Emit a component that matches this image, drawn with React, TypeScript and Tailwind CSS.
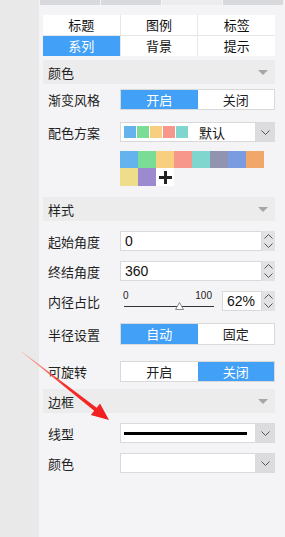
import React from 'react';

const cjk = { fontFamily: '"Noto Sans CJK SC", "Noto Sans", sans-serif' };
const latin = { fontFamily: '"Liberation Sans", Arial, sans-serif' };

const swatches = ['#65b3ee', '#7bdc95', '#f8ce7f', '#f7968a', '#7fd6cf'];
const palette = ['#65b3ee', '#7bdc95', '#f8ce7f', '#f7968a', '#7fd6cf', '#9194ae', '#7b9be0', '#f1a769', '#eedd8a', '#9b8ad0'];

const Chevron = ({ up = false }: { up?: boolean }) => (
  <svg width="9" height="5" viewBox="0 0 9 5">
    <path d={up ? 'M0.5 4.5 L4.5 0.5 L8.5 4.5' : 'M0.5 0.5 L4.5 4.5 L8.5 0.5'} fill="none" stroke="#555" strokeWidth="1" />
  </svg>
);

const Tri = () => (
  <svg width="10" height="5" viewBox="0 0 10 5">
    <path d="M0 0 L10 0 L5 5 Z" fill="#a6a6a8" />
  </svg>
);

const Section = ({ title, className = '' }: { title: string; className?: string }) => (
  <div className={`flex items-center justify-between h-6 bg-[#ececec] pl-[5px] pr-[7px] text-[13px] text-[#222] ${className}`}>
    <span className="leading-none">{title}</span>
    <Tri />
  </div>
);

const Row = ({ label, className = '', children }: { label: string; className?: string; children: React.ReactNode }) => (
  <div className={`flex items-center ${className}`}>
    <div className="w-[77px] pl-[5px] text-[13px] leading-none text-[#222]">{label}</div>
    <div className="flex-1">{children}</div>
  </div>
);

const Toggle = ({ on, h = 'h-[21px]' }: { on: 'left' | 'right'; h?: string }) => (
  <div className={`flex ${h} border border-[#d9d9d9] bg-white text-[13px]`}>
    <div className={`flex-1 flex items-center justify-center ${on === 'left' ? 'bg-[#42a0f6] text-white' : 'text-[#222]'}`}>开启</div>
    <div className={`flex-1 flex items-center justify-center ${on === 'right' ? 'bg-[#42a0f6] text-white' : 'text-[#222]'}`}>关闭</div>
  </div>
);

const Select = ({ children }: { children?: React.ReactNode }) => (
  <div className="flex h-[20px] border border-[#d9d9d9] border-r-0 bg-white">
    <div className="flex-1 flex items-center min-w-0">{children}</div>
    <div className="w-[20px] flex items-center justify-center bg-[#dcdcdf]">
      <Chevron />
    </div>
  </div>
);

const NumInput = ({ value, className = '' }: { value: string; className?: string }) => (
  <div className={`flex h-[20px] ${className}`}>
    <div className="flex-1 flex items-center border border-[#d9d9d9] bg-white pl-[4px] text-[14px] text-[#111]" style={latin}>
      {value}
    </div>
    <div className="w-[13px] flex flex-col items-center justify-center gap-[4px] bg-[#e2e2e5]">
      <Chevron up />
      <Chevron />
    </div>
  </div>
);

const tabs = ['标题', '图例', '标签', '系列', '背景', '提示'];

export default function App() {
  return (
    <div className="relative flex w-[285px] h-[537px] overflow-hidden" style={cjk}>
      <div className="w-[39px] bg-[#e9e9e9]" />
      <div className="flex-1 bg-[#f4f4f6]">
        <div className="flex gap-px pl-px h-[5px]">
          <div className="w-[60px] bg-[#d8d9dd]" />
          <div className="w-[60px] bg-[#d8d9dd]" />
          <div className="w-[60px] bg-[#ececef]" />
          <div className="w-[60px] bg-[#d8d9dd]" />
        </div>

        <div className="ml-[4px] w-[232px]">
          <div className="mt-[10px] grid grid-cols-3 gap-px bg-[#e6e6e8]">
            {tabs.map((t) => (
              <div
                key={t}
                className={`flex items-center justify-center h-[20px] text-[13px] ${t === '系列' ? 'bg-[#42a0f6] text-white' : 'bg-white text-[#111]'}`}
              >
                {t}
              </div>
            ))}
          </div>

          <Section title="颜色" className="mt-[4px]" />
          <Row label="渐变风格" className="mt-[5px]">
            <Toggle on="left" />
          </Row>
          <Row label="配色方案" className="mt-[12px]">
            <Select>
              <div className="flex gap-px pl-[3px]">
                {swatches.map((c) => (
                  <div key={c} className="w-[12px] h-[12px]" style={{ background: c }} />
                ))}
              </div>
              <span className="ml-[11px] text-[13px] text-[#111] leading-none">默认</span>
            </Select>
          </Row>
          <div className="mt-[9px] ml-[77px] grid grid-cols-[repeat(8,18px)] grid-rows-[17px_18px]">
            {palette.map((c, i) => (
              <div key={i} style={{ background: c }} />
            ))}
            <div className="flex items-center justify-center bg-white">
              <svg width="13" height="13" viewBox="0 0 13 13">
                <rect x="5" y="0" width="3" height="13" fill="#222" />
                <rect x="0" y="5" width="13" height="3" fill="#222" />
              </svg>
            </div>
          </div>

          <Section title="样式" className="mt-[11px]" />
          <Row label="起始角度" className="mt-[10px]">
            <NumInput value="0" />
          </Row>
          <Row label="终结角度" className="mt-[10px]">
            <NumInput value="360" />
          </Row>
          <Row label="内径占比" className="mt-[10px]">
            <div className="flex h-[20px]">
              <div className="w-[102px] relative">
                <div className="flex justify-between pl-[3px] pr-[10px] text-[10px] leading-none text-[#222]" style={latin}>
                  <span>0</span>
                  <span>100</span>
                </div>
                <svg className="absolute left-0 top-[9px]" width="102" height="11" viewBox="0 0 102 11">
                  <line x1="4" y1="6.5" x2="94" y2="6.5" stroke="#333" strokeWidth="1" />
                  <path d="M59.5 2.5 L63.5 9.5 L55.5 9.5 Z" fill="#fff" stroke="#888" strokeWidth="1" />
                </svg>
              </div>
              <NumInput value="62%" className="flex-1" />
            </div>
          </Row>
          <Row label="半径设置" className="mt-[12px]">
            <div className="flex h-[22px] border border-[#d9d9d9] bg-white text-[13px]">
              <div className="flex-1 flex items-center justify-center bg-[#42a0f6] text-white">自动</div>
              <div className="flex-1 flex items-center justify-center text-[#222]">固定</div>
            </div>
          </Row>
          <Row label="可旋转" className="mt-[16px]">
            <Toggle on="right" />
          </Row>

          <Section title="边框" className="mt-[7px]" />
          <Row label="线型" className="mt-[10px]">
            <Select>
              <div className="ml-[3px] w-[123px] h-[3px] bg-black" />
            </Select>
          </Row>
          <Row label="颜色" className="mt-[10px]">
            <Select />
          </Row>
        </div>
      </div>

      <svg className="absolute left-0 top-0 pointer-events-none" width="285" height="537" viewBox="0 0 285 537">
        <defs>
          <linearGradient id="ar" x1="22" y1="352" x2="108" y2="419" gradientUnits="userSpaceOnUse">
            <stop offset="0" stopColor="#ff8a80" stopOpacity="0.6" />
            <stop offset="0.5" stopColor="#f3302a" />
            <stop offset="1" stopColor="#f01e1e" />
          </linearGradient>
        </defs>
        <path
          d="M22.1 351.8 L22.0 352.2 L94.2 410.8 L90.8 415.0 L109 420 L100.0 403.6 L96.7 407.7 Z"
          fill="url(#ar)"
        />
      </svg>
    </div>
  );
}
